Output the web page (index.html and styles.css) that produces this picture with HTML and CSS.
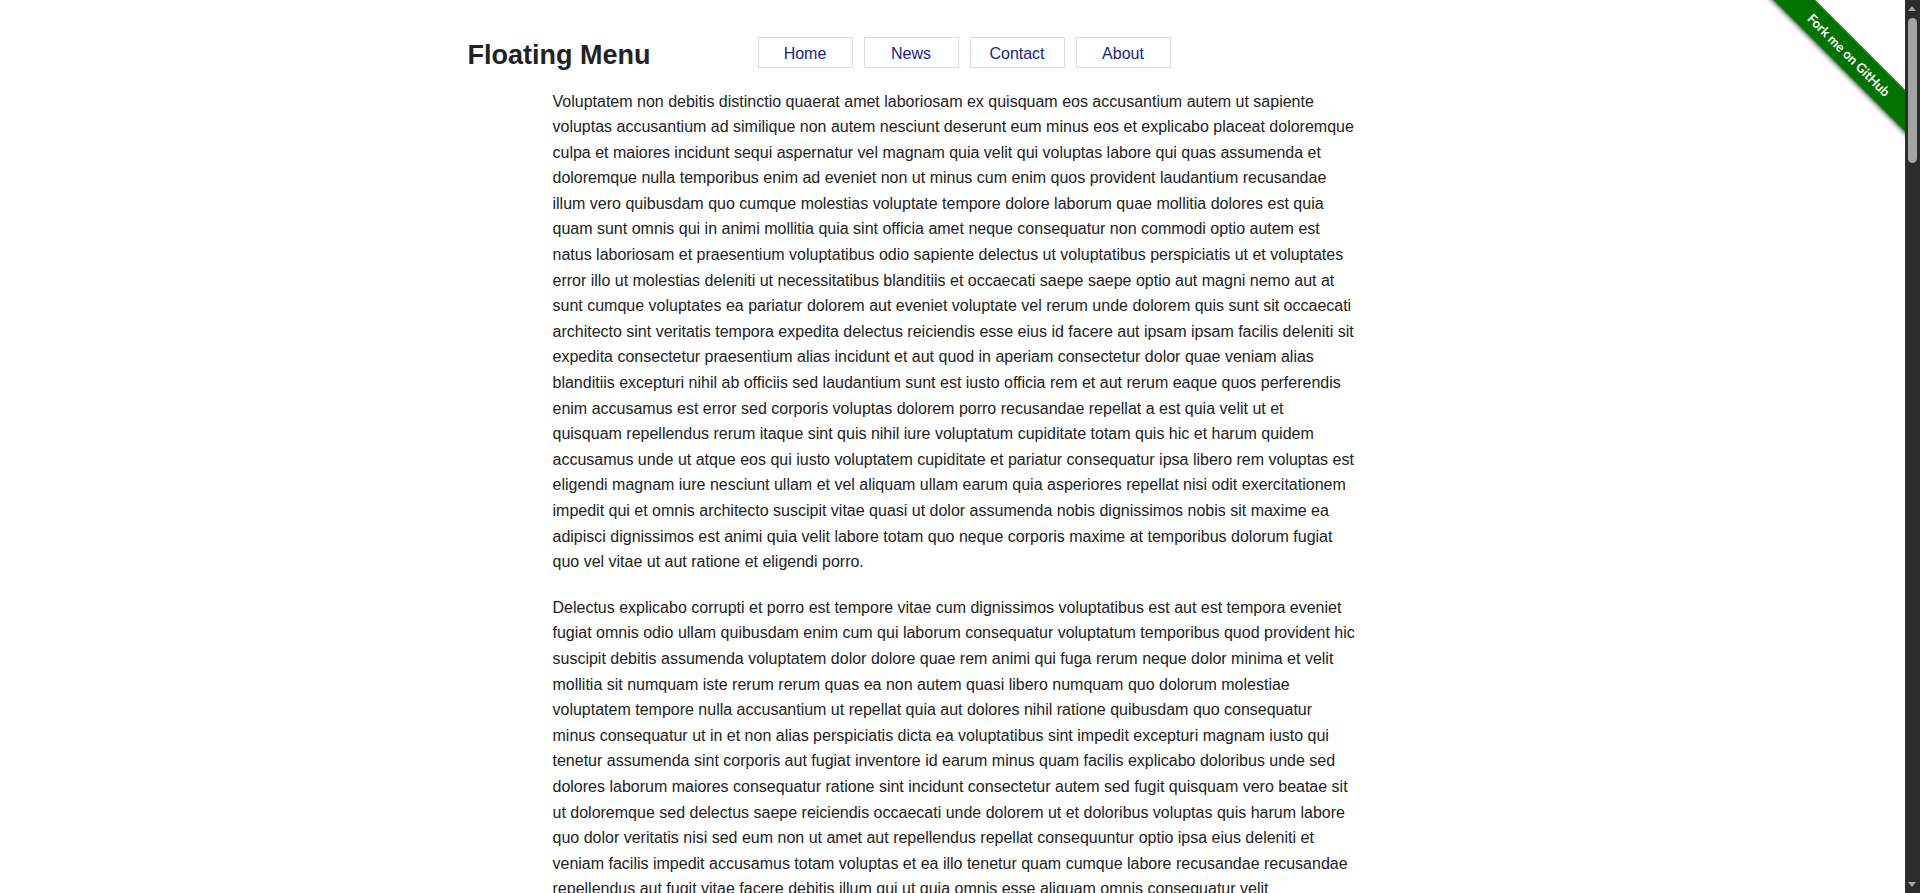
FILE: index.html
```html
<!DOCTYPE html>
<html lang="en">
<head>
<meta charset="utf-8">
<title>Floating Menu</title>
<link rel="stylesheet" href="styles.css">
</head>
<body>
<header class="site-header">
  <h1 class="site-title">Floating Menu</h1>
  <nav class="menu">
    <a class="menu-item" href="#">Home</a>
    <a class="menu-item" href="#">News</a>
    <a class="menu-item" href="#">Contact</a>
    <a class="menu-item" href="#">About</a>
  </nav>
</header>
<main class="content">
  <p>Voluptatem non debitis distinctio quaerat amet laboriosam ex quisquam eos accusantium autem ut sapiente voluptas accusantium ad similique non autem nesciunt deserunt eum minus eos et explicabo placeat doloremque culpa et maiores incidunt sequi aspernatur vel magnam quia velit qui voluptas labore qui quas assumenda et doloremque nulla temporibus enim ad eveniet non ut minus cum enim quos provident laudantium recusandae illum vero quibusdam quo cumque molestias voluptate tempore dolore laborum quae mollitia dolores est quia quam sunt omnis qui in animi mollitia quia sint officia amet neque consequatur non commodi optio autem est natus laboriosam et praesentium voluptatibus odio sapiente delectus ut voluptatibus perspiciatis ut et voluptates error illo ut molestias deleniti ut necessitatibus blanditiis et occaecati saepe saepe optio aut magni nemo aut at sunt cumque voluptates ea pariatur dolorem aut eveniet voluptate vel rerum unde dolorem quis sunt sit occaecati architecto sint veritatis tempora expedita delectus reiciendis esse eius id facere aut ipsam ipsam facilis deleniti sit expedita consectetur praesentium alias incidunt et aut quod in aperiam consectetur dolor quae veniam alias blanditiis excepturi nihil ab officiis sed laudantium sunt est iusto officia rem et aut rerum eaque quos perferendis enim accusamus est error sed corporis voluptas dolorem porro recusandae repellat a est quia velit ut et quisquam repellendus rerum itaque sint quis nihil iure voluptatum cupiditate totam quis hic et harum quidem accusamus unde ut atque eos qui iusto voluptatem cupiditate et pariatur consequatur ipsa libero rem voluptas est eligendi magnam iure nesciunt ullam et vel aliquam ullam earum quia asperiores repellat nisi odit exercitationem impedit qui et omnis architecto suscipit vitae quasi ut dolor assumenda nobis dignissimos nobis sit maxime ea adipisci dignissimos est animi quia velit labore totam quo neque corporis maxime at temporibus dolorum fugiat quo vel vitae ut aut ratione et eligendi porro.</p>
  <p>Delectus explicabo corrupti et porro est tempore vitae cum dignissimos voluptatibus est aut est tempora eveniet fugiat omnis odio ullam quibusdam enim cum qui laborum consequatur voluptatum temporibus quod provident hic suscipit debitis assumenda voluptatem dolor dolore quae rem animi qui fuga rerum neque dolor minima et velit mollitia sit numquam iste rerum rerum quas ea non autem quasi libero numquam quo dolorum molestiae voluptatem tempore nulla accusantium ut repellat quia aut dolores nihil ratione quibusdam quo consequatur minus consequatur ut in et non alias perspiciatis dicta ea voluptatibus sint impedit excepturi magnam iusto qui tenetur assumenda sint corporis aut fugiat inventore id earum minus quam facilis explicabo doloribus unde sed dolores laborum maiores consequatur ratione sint incidunt consectetur autem sed fugit quisquam vero beatae sit ut doloremque sed delectus saepe reiciendis occaecati unde dolorem ut et doloribus voluptas quis harum labore quo dolor veritatis nisi sed eum non ut amet aut repellendus repellat consequuntur optio ipsa eius deleniti et veniam facilis impedit accusamus totam voluptas et ea illo tenetur quam cumque labore recusandae recusandae repellendus aut fugit vitae facere debitis illum qui ut quia omnis esse aliquam omnis consequatur velit necessitatibus dolorum sint aut voluptatem ratione quaerat vel eveniet.</p>
</main>
<a class="ribbon" href="#"><span class="ribbon-band">Fork me on GitHub</span></a>
<div class="scrollbar" aria-hidden="true">
  <span class="scroll-arrow scroll-up"></span>
  <span class="scroll-thumb"></span>
  <span class="scroll-arrow scroll-down"></span>
</div>
</body>
</html>
```
FILE: styles.css
```css
html {
  background: #fff;
}
body {
  position: relative;
  margin: 0 15px 0 0;
  background: #fff;
  color: #222;
  font-family: "Liberation Sans", Arial, sans-serif;
  font-size: 16px;
}
.site-header {
  width: 970px;
  margin: 0 auto;
  padding-top: 37px;
  display: flex;
  align-items: flex-start;
}
.site-title {
  width: 290px;
  margin: 3px 0 0;
  font-size: 27px;
  font-weight: bold;
  line-height: 31px;
  color: #222;
}
.menu {
  display: flex;
  gap: 11px;
}
.menu-item {
  display: block;
  width: 93px;
  padding: 6px 0 4px;
  line-height: 19px;
  border: 1px solid #dcdcdc;
  text-align: center;
  text-decoration: none;
  color: #172484;
  font-size: 16px;
}
.content {
  width: 800px;
  margin: 0 auto;
  padding-top: 17.5px;
  min-height: 5210px;
}
.content p {
  margin: 0 -4px 20px 0;
  line-height: 25.6px;
  color: #222;
}
.ribbon {
  position: absolute;
  top: 0;
  right: 0;
  width: 149px;
  height: 149px;
  overflow: hidden;
  text-decoration: none;
}
.ribbon-band {
  position: absolute;
  left: -17px;
  top: 40px;
  width: 220px;
  height: 30px;
  box-sizing: border-box;
  transform: rotate(45deg);
  background: #007200;
  color: #fff;
  font-family: Lato, "Open Sans", sans-serif;
  font-weight: bold;
  font-size: 13px;
  line-height: 28px;
  text-align: center;
  box-shadow: 0 2px 4px rgba(0, 0, 0, 0.45);
  border-top: 1px solid #3f9a3f;
  border-bottom: 1px solid #3f9a3f;
}
.scrollbar {
  position: fixed;
  top: 0;
  right: 0;
  bottom: 0;
  width: 15px;
  background: #2c2c2c;
}
.scroll-thumb {
  position: absolute;
  top: 18px;
  left: 3px;
  width: 9px;
  height: 145px;
  border-radius: 5px;
  background: #a3a3a3;
}
.scroll-arrow {
  position: absolute;
  left: 3px;
  width: 0;
  height: 0;
  border-left: 4.5px solid transparent;
  border-right: 4.5px solid transparent;
}
.scroll-up {
  top: 6px;
  border-bottom: 5px solid #a3a3a3;
}
.scroll-down {
  bottom: 6px;
  border-top: 5px solid #a3a3a3;
}
```
